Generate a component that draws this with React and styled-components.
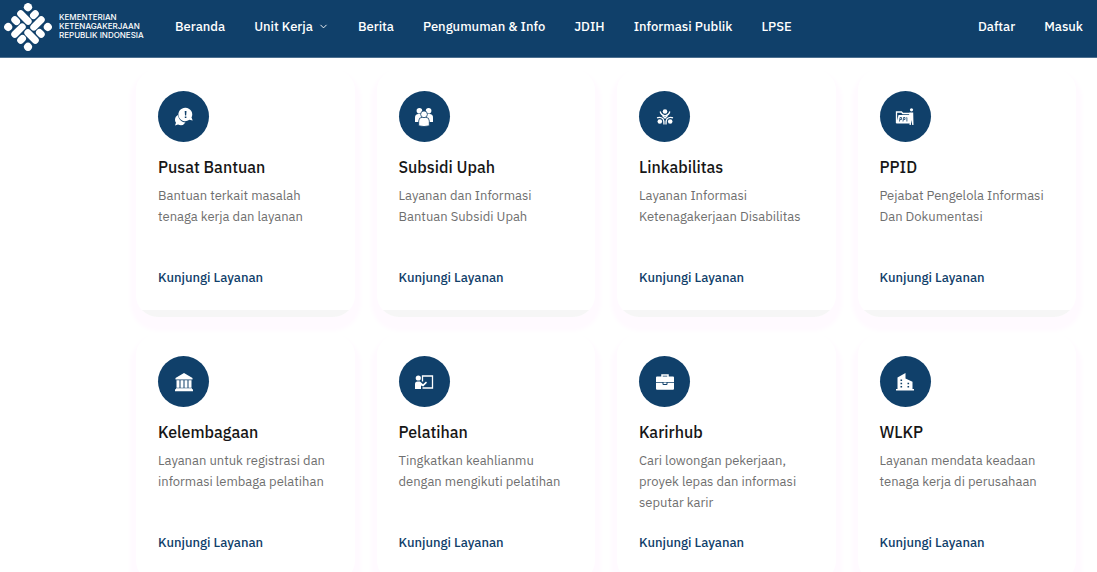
import React from "react";
import styled, { createGlobalStyle } from "styled-components";
import { FiChevronDown } from "react-icons/fi";

const navy = "#10406a";

const GlobalStyle = createGlobalStyle`
  * {
    box-sizing: border-box;
  }
  html {
    overflow: hidden;
  }
  body {
    margin: 0;
    background: #fff;
    font-family: "IBM Plex Sans", "Noto Sans", sans-serif;
    font-size: 13px;
    line-height: 21px;
  }
`;

const Header = styled.header`
  display: flex;
  align-items: center;
  height: 58px;
  padding: 0 14px 4px 4px;
  background: ${navy};
  border-bottom: 1px solid #4d7090;
`;

const Brand = styled.a`
  display: flex;
  align-items: center;
  gap: 7px;
  width: 171px;
  color: #fff;
  text-decoration: none;
  font-family: Inter, sans-serif;
  font-size: 8px;
  font-weight: 500;
  line-height: 9px;
  white-space: nowrap;

  svg {
    flex: none;
  }
`;

const Nav = styled.nav`
  display: flex;
  flex: ${props => (props.$grow ? 1 : "none")};
  gap: 29px;
`;

const NavLink = styled.a`
  display: inline-flex;
  align-items: center;
  gap: 5px;
  color: #fff;
  font-weight: 500;
  text-decoration: none;
  white-space: nowrap;
`;

const Services = styled.main`
  display: grid;
  grid-template-columns: repeat(4, 1fr);
  gap: 17px 22px;
  padding: 11px 21px 16px 136px;
`;

const Card = styled.article`
  padding: 22px 22px 29px;
  border-radius: 22px;
  background: linear-gradient(to top, #f6f6f6 7px, #fff 7px);
  box-shadow: 0 8px 4px 6px #fffaff;
`;

const IconCircle = styled.div`
  display: flex;
  align-items: center;
  justify-content: center;
  width: 51px;
  height: 51px;
  border-radius: 50%;
  background: ${navy};
`;

const Title = styled.h2`
  margin: 13px 0 6px;
  color: #161616;
  font-size: 16px;
  font-weight: 500;
  line-height: 24px;
`;

const Description = styled.p`
  min-height: 63px;
  margin: 0 0 19px;
  color: #6f6f6f;
`;

const VisitLink = styled.a`
  display: block;
  color: ${navy};
  font-weight: 500;
  text-decoration: none;
`;

const Icon = ({ children }) => (
  <svg width="20" height="20" viewBox="0 0 20 20" fill="#fff" aria-hidden="true">
    {children}
  </svg>
);

const HelpIcon = () => (
  <Icon>
    <path d="M1 13a5.5 5.5 0 0 1 3-5c.5 4 3 7 7.500 7.500A6 6 0 0 1 4 17.500L1 18.500l1-2.700A5 5 0 0 1 1 13z" />
    <path d="M11.500.8a6.700 6.700 0 0 1 6 9.800l1.200 3-3.400-.9A6.700 6.700 0 1 1 11.500.8z" />
    <path d="M10.700 4h1.800l-.3 4.500h-1.200zM10.800 9.500h1.600V11h-1.600z" fill={navy} />
  </Icon>
);

const PeopleIcon = () => (
  <Icon>
    <circle cx="5.400" cy="3.800" r="2.800" />
    <circle cx="14.600" cy="3.800" r="2.800" />
    <path d="M1 15V10.500Q1 7 4.500 7h11Q19 7 19 10.500V15z" />
    <g stroke={navy} strokeWidth=".8">
      <path d="M4.700 18.800V14q0-3.700 3.500-3.700h3.600q3.500 0 3.500 3.700v4.800q-5.300 1.500-10.600 0z" />
      <circle cx="10" cy="7.300" r="3.400" />
    </g>
  </Icon>
);

const InclusionIcon = () => (
  <Icon>
    <circle cx="10" cy="4.500" r="2.300" />
    <circle cx="4.800" cy="14.500" r="2.300" />
    <circle cx="15.200" cy="14.500" r="2.300" />
    <g fill="none" stroke="#fff" strokeWidth="1.300">
      <path d="M5.200 4.500Q6 8.200 10 8.800q4-.6 4.800-4.300M2 10.800q3.500-1.300 6 1 1.400 2 1 5.700M18 10.800q-3.500-1.300-6 1-1.400 2-1 5.700" />
      <path d="M7.500 8.500 10 11l2.500-2.500" />
    </g>
  </Icon>
);

const ArchiveIcon = () => (
  <Icon>
    <path d="M1.500 16V5h5l1.300 1.500h7V9" fill="none" stroke="#fff" strokeWidth="1.300" />
    <path d="M3.500 8h12.800l-1 8.500H1.200z" />
    <path d="M4.500 14.500l.5-4h1.500v2H5M8 14.500l.5-4H10v2H8.500M11.500 10.500h.4v4" fill="none" stroke={navy} strokeWidth=".8" />
    <circle cx="16.500" cy="2.800" r="1.600" />
    <path d="M14.500 5.500h3.700l.3 12.500h-1.300l-.7-5-.7 5h-1.300l.8-9z" />
  </Icon>
);

const InstitutionIcon = () => (
  <Icon>
    <path d="M10 1l8.500 5v1.500h-17V6zM2.500 8.300h3v7.400h-3zM6.500 8.300h3v7.400h-3zM10.500 8.300h3v7.400h-3zM14.500 8.300h3v7.400h-3zM2 16.200h16v1.100h1v2H1v-2h1z" />
  </Icon>
);

const TrainingIcon = () => (
  <Icon>
    <circle cx="4.300" cy="6" r="2.600" />
    <path d="M1 17v-5q0-2.500 2.500-2.500H6l3 2.700 3-2.700 1 1.200-3.800 3.800L7 13.500V17z" />
    <path d="M8.500 9.500V4H18.500V16H8.500" fill="none" stroke="#fff" strokeWidth="1.300" />
  </Icon>
);

const BriefcaseIcon = () => (
  <Icon>
    <path d="M7 5V3h6v2" fill="none" stroke="#fff" strokeWidth="1.500" />
    <path d="M2 4.500h16q1 0 1 1V10H1V5.500q0-1 1-1zM1 10.800h6.500v1.200q0 1 1 1h3q1 0 1-1v-1.200H19v6q0 1-1 1H2q-1 0-1-1zM8.500 10.500h3V12h-3z" />
  </Icon>
);

const CompanyIcon = () => (
  <Icon>
    <path d="M2.500 5.500 10.500 1v5.500l7 3.300V17H19v1.500H1V17h1.500z" />
    <path d="M5.500 7.500h1.600V9H5.500zM5.500 10.700h1.600v1.500H5.500zM5.500 14h1.600v1.500H5.500zM12.500 10.700h1.600v1.500h-1.600zM12.500 14h1.600v1.500h-1.600z" fill={navy} />
  </Icon>
);

const services = [
  { title: "Pusat Bantuan", text: "Bantuan terkait masalah tenaga kerja dan layanan", icon: HelpIcon },
  { title: "Subsidi Upah", text: "Layanan dan Informasi Bantuan Subsidi Upah", icon: PeopleIcon },
  { title: "Linkabilitas", text: "Layanan Informasi Ketenagakerjaan Disabilitas", icon: InclusionIcon },
  { title: "PPID", text: "Pejabat Pengelola Informasi Dan Dokumentasi", icon: ArchiveIcon },
  { title: "Kelembagaan", text: "Layanan untuk registrasi dan informasi lembaga pelatihan", icon: InstitutionIcon },
  { title: "Pelatihan", text: "Tingkatkan keahlianmu dengan mengikuti pelatihan", icon: TrainingIcon },
  { title: "Karirhub", text: "Cari lowongan pekerjaan, proyek lepas dan informasi seputar karir", icon: BriefcaseIcon },
  { title: "WLKP", text: "Layanan mendata keadaan tenaga kerja di perusahaan", icon: CompanyIcon }
];

const menu = ["Beranda", "Unit Kerja", "Berita", "Pengumuman & Info", "JDIH", "Informasi Publik", "LPSE"];

// one arm of the woven emblem, repeated at each quarter turn
const Logo = () => (
  <svg width="48" height="48" viewBox="-24 -24 48 48" fill="#fff" aria-hidden="true">
    {[45, 135, 225, 315].map(angle => (
      <g key={angle} transform={`rotate(${angle})`}>
        <circle cx="14" cy="14" r="4" />
        <path d="M-14.500-4.200H-4" stroke="#fff" strokeWidth="7" strokeLinecap="round" />
        <path d="M12-4.200h2.500" stroke="#fff" strokeWidth="7" strokeLinecap="round" />
      </g>
    ))}
  </svg>
);

const App = () => {
  return (
    <>
      <GlobalStyle />
      <Header>
        <Brand href="#">
          <Logo />
          <span>
            KEMENTERIAN
            <br />
            KETENAGAKERJAAN
            <br />
            REPUBLIK INDONESIA
          </span>
        </Brand>
        <Nav $grow>
          {menu.map(item => (
            <NavLink key={item} href="#">
              {item}
              {item === "Unit Kerja" && <FiChevronDown size={11} />}
            </NavLink>
          ))}
        </Nav>
        <Nav>
          <NavLink href="#">Daftar</NavLink>
          <NavLink href="#">Masuk</NavLink>
        </Nav>
      </Header>
      <Services>
        {services.map(({ title, text, icon: ServiceIcon }) => (
          <Card key={title}>
            <IconCircle>
              <ServiceIcon />
            </IconCircle>
            <Title>{title}</Title>
            <Description>{text}</Description>
            <VisitLink href="#">Kunjungi Layanan</VisitLink>
          </Card>
        ))}
      </Services>
    </>
  );
};

export default App;
